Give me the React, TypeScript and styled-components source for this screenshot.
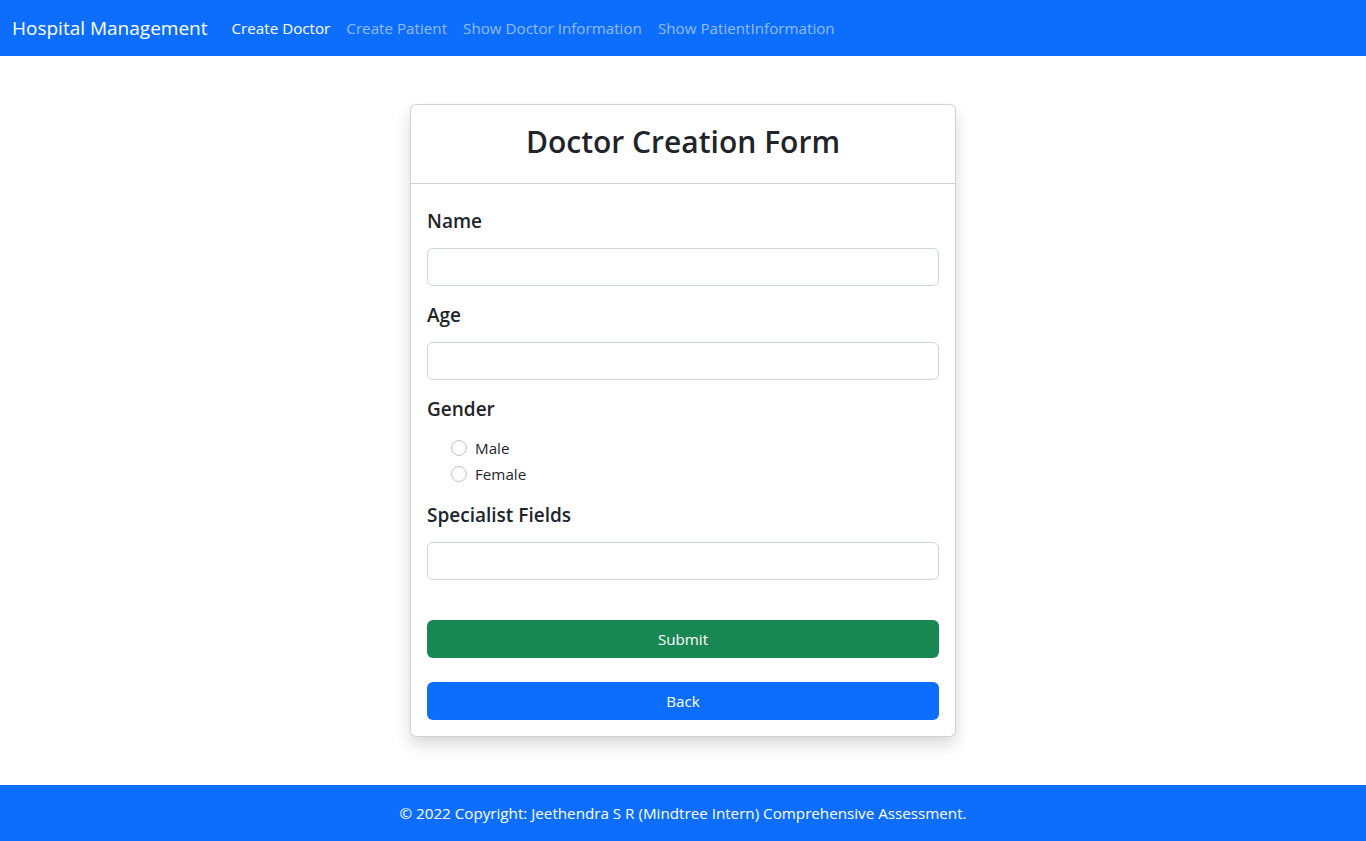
import React from "react";
import styled, { createGlobalStyle } from "styled-components";

const Global = createGlobalStyle`
  * { box-sizing: border-box; }
  body { margin: 0; font-family: "Open Sans", "Noto Sans", sans-serif; color: #212529; background: #fff; font-size: 15.2px; }
`;

const Nav = styled.nav`
  height: 56px; background: #0d6efd; display: flex; align-items: center; padding: 0 12px;
`;
const Brand = styled.a`
  color: #fff; font-size: 19px; margin-right: 16px; text-decoration: none; white-space: nowrap;
`;
const NavLink = styled.a<{ $active?: boolean }>`
  color: ${(p) => (p.$active ? "#fff" : "rgba(255,255,255,0.55)")};
  padding: 8px; font-size: 15.2px; text-decoration: none; white-space: nowrap;
`;
const Main = styled.main`
  display: flex; justify-content: center; padding: 48px 0 48px;
`;
const Card = styled.div`
  width: 546px; border: 1px solid rgba(0,0,0,0.175); border-radius: 6px;
  box-shadow: 0 8px 16px rgba(0,0,0,0.15); background: #fff;
`;
const CardHeader = styled.div`
  height: 79px; border-bottom: 1px solid rgba(0,0,0,0.175);
  display: flex; align-items: center; justify-content: center;
`;
const Title = styled.h1`
  margin: 0; font-size: 30px; font-weight: 600; line-height: 1.2; padding-bottom: 4px;
`;
const CardBody = styled.div`
  padding: 16px;
`;
const Group = styled.div<{ $mb?: number }>`
  padding-bottom: ${(p) => p.$mb ?? 8}px;
`;
const Label = styled.label<{ $mb?: number }>`
  display: block; font-size: 19px; font-weight: 600; line-height: 24px;
  padding-top: 9px; margin-bottom: ${(p) => p.$mb ?? 15}px;
`;
const Input = styled.input`
  display: block; width: 100%; height: 38px; border: 1px solid #ced4da; border-radius: 6px;
  padding: 6px 12px; font-size: 16px; font-family: inherit;
`;
const RadioList = styled.div`
  padding-left: 24px; margin-bottom: 7px;
`;
const RadioRow = styled.label`
  display: flex; align-items: center; height: 26px; font-size: 15.2px; gap: 8px;
`;
const Radio = styled.input`
  appearance: none; width: 16px; height: 16px; margin: 0; border: 1px solid #c4c4c4;
  border-radius: 50%; background: #fff;
`;
const Button = styled.button<{ $color: string }>`
  display: block; width: 100%; height: 38px; border: none; border-radius: 6px;
  background: ${(p) => p.$color}; color: #fff; font-size: 15.2px; font-family: inherit;
`;
const Spacer = styled.div<{ $h: number }>`
  height: ${(p) => p.$h}px;
`;
const Footer = styled.footer`
  height: 56px; background: #0d6efd; color: #fff; display: flex; align-items: center;
  justify-content: center; font-size: 15.2px;
`;

export default function App() {
  return (
    <>
      <Global />
      <Nav>
        <Brand>Hospital Management</Brand>
        <NavLink $active>Create Doctor</NavLink>
        <NavLink>Create Patient</NavLink>
        <NavLink>Show Doctor Information</NavLink>
        <NavLink>Show PatientInformation</NavLink>
      </Nav>
      <Main>
        <Card>
          <CardHeader>
            <Title>Doctor Creation Form</Title>
          </CardHeader>
          <CardBody>
            <Group>
              <Label>Name</Label>
              <Input type="text" />
            </Group>
            <Group>
              <Label>Age</Label>
              <Input type="text" />
            </Group>
            <Group $mb={0}>
              <Label $mb={14}>Gender</Label>
              <RadioList>
                <RadioRow><Radio type="radio" name="g" />Male</RadioRow>
                <RadioRow><Radio type="radio" name="g" />Female</RadioRow>
              </RadioList>
            </Group>
            <Group $mb={0}>
              <Label>Specialist Fields</Label>
              <Input type="text" />
            </Group>
            <Spacer $h={40} />
            <Button $color="#198754">Submit</Button>
            <Spacer $h={24} />
            <Button $color="#0d6efd">Back</Button>
          </CardBody>
        </Card>
      </Main>
      <Footer>© 2022 Copyright: Jeethendra S R (Mindtree Intern) Comprehensive Assessment.</Footer>
    </>
  );
}
